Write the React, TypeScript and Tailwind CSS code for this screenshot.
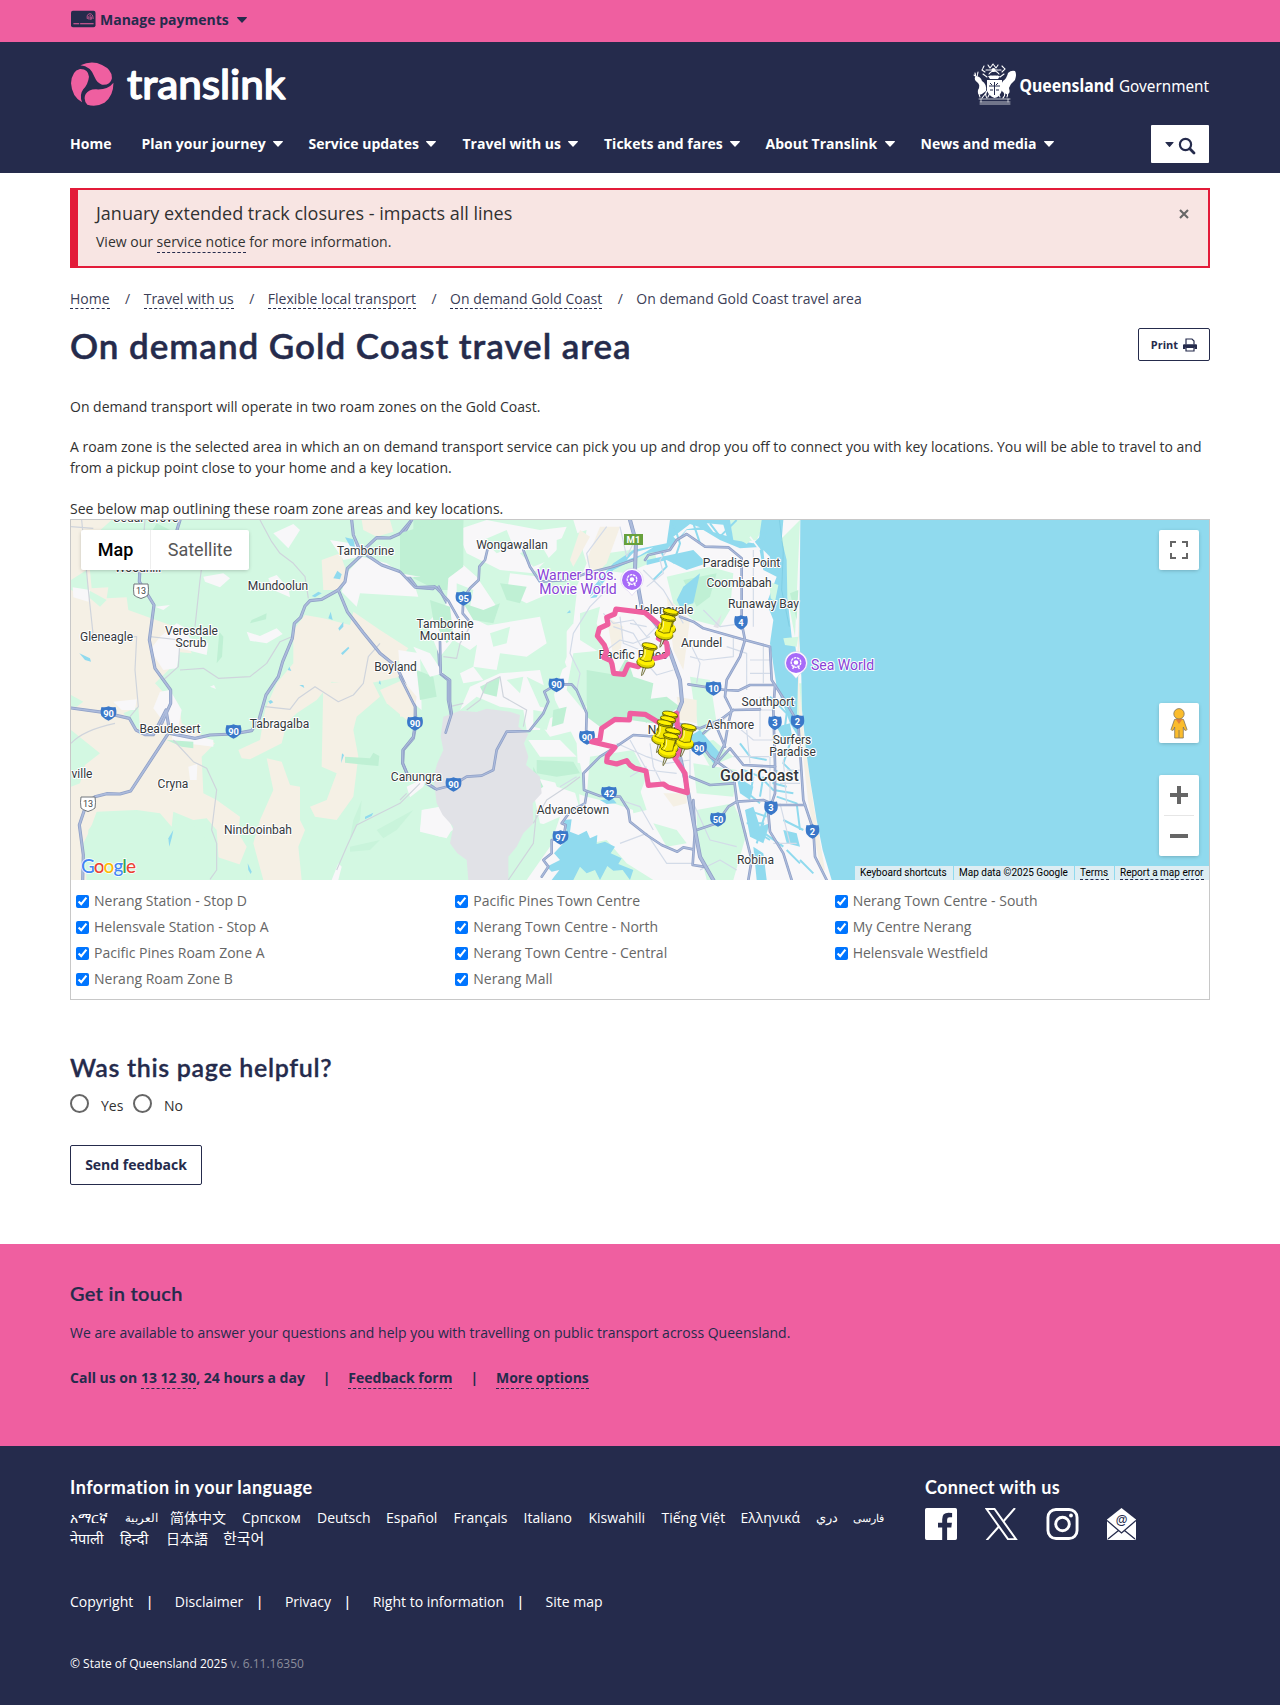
import React from "react";

/* ---------- shared bits ---------- */

const Caret = ({ className = "h-[6px] w-[10px]" }: { className?: string }) => (
  <svg viewBox="0 0 10 6" className={"shrink-0 fill-current " + className}>
    <path d="M0.4 0h9.2q.6.4.1.9L5.5 5.6q-.5.5-1 0L.3.9Q-.2.4.4 0Z" />
  </svg>
);

const Dashed = ({ children }: { children: React.ReactNode }) => (
  <a href="#" className="border-b border-dashed border-[#252b4c] pb-px leading-[17px]">
    {children}
  </a>
);

/* ---------- header ---------- */

const TranslinkLogo = () => (
  <svg viewBox="0 0 220 46" className="h-[46px] w-[220px]">
    <g transform="translate(-70,-61) scale(0.40816,0.33333)" fill="#ef5fa0">
      <path d="M197 196Q225 180 250 195Q276 210 274 236Q270 256 250 254Q238 250 232 232Q222 198 197 196Z" />
      <path d="M201 307Q176 290 174 250Q176 212 196 207Q216 206 218 230Q216 252 204 268Q194 284 201 307Z" />
      <path d="M278 248Q278 288 256 308Q236 322 214 314Q203 298 210 282Q218 267 236 268Q264 270 278 248Z" />
    </g>
    <text
      x="57"
      y="38"
      textLength="158.5"
      lengthAdjust="spacingAndGlyphs"
      fontSize="39.5"
      className="fill-white stroke-white font-medium [font-family:Lato,sans-serif]"
      strokeWidth="1.3"
      strokeLinejoin="round"
    >
      translink
    </text>
  </svg>
);

const QldLogo = () => (
  <svg viewBox="0 0 238 44" className="h-[44px] w-[238px] overflow-visible">
    <g fill="none" stroke="#fff" strokeWidth="1.1" strokeLinecap="round" strokeLinejoin="round">
      <path d="M16 3l2 3 3-4 3 4 2-3M12 4l-2 4 3 2M30 4l3 3-3 3M14 8h15M17 12q5-6 10 0M18 14h8M11 12l4 3M32 12l-4 3M2 13l4 3M3 11l1 4M6 10l-1 5" strokeDasharray="2.500 0.800" />
      <path d="M7 37h31M8 40h30M8 42h30M9 37v3M36 37v3" strokeWidth="0.700" />
      <path d="M8 35q-3-6 3-9M10 36l4-5M15 36q-3-4 1-8M35 35q2-5-3-9M31 36q4-4-1-8M16 35l2-4M28 35l-2-4" />
    </g>
    <g fill="#fff">
      <path d="M3 15q5-2 7 4q5 3 4 10l-4 3q-5 2-4-4q3-5-1-8q-3-2-2-5Z" />
      <path d="M43 9q-4-1-7 2q-1 5-5 8q-3 4-1 10l4 3q5 1 3-6q2-5 6-8q2-6 0-9Z" />
      <path d="M15 18h15v10q-2 7-7.500 8q-6-2-7.500-8Z" />
      <circle cx="21.500" cy="8" r="2" />
      <path d="M16 14h12l-2 3h-8Z" />
    </g>
    <path d="M22.500 20v13M17 24h11M18 21l2 2M26 21l-2 2M18 28h3M24 28h3" stroke="#252b4c" strokeWidth="1" fill="none" />
    <text x="47.5" y="29.8" fontSize="17.5" textLength="94.500" lengthAdjust="spacingAndGlyphs" className="fill-white font-bold [font-family:'Noto_Sans',sans-serif]">
      Queensland
    </text>
    <text x="147" y="29.8" fontSize="17" textLength="90" lengthAdjust="spacingAndGlyphs" className="fill-white font-normal [font-family:'Noto_Sans',sans-serif]">
      Government
    </text>
  </svg>
);

const navItems: [string, string][] = [
  ["Home", "w-[71.500px]"],
  ["Plan your journey", "w-[167px]"],
  ["Service updates", "w-[154px]"],
  ["Travel with us", "w-[141.500px]"],
  ["Tickets and fares", "w-[161.500px]"],
  ["About Translink", "w-[155px]"],
  ["News and media", "w-[150px]"],
];

const Header = () => (
  <header>
    <div className="h-[42px] bg-[#ef5fa0] text-[#252b4c]">
      <div className="mx-auto flex h-[39px] w-[1140px] items-center text-[14px] font-bold">
        <svg viewBox="0 0 26 18" className="mt-[-2px] mr-[4px] ml-[1px] h-[18px] w-[25px]">
          <rect x="0" y="0.500" width="25.500" height="17" rx="2" fill="#252b4c" />
          <path d="M2.500 14h6M9.500 14h14" stroke="#ef5fa0" strokeWidth="1.100" />
          <path d="M17 9q-1-5 2.500-5.500Q23 3.500 23 9M18.500 9.500q-.5-4 1.200-4.200Q21.500 5.500 21.300 9.500M20 7v3" stroke="#ef5fa0" strokeWidth="0.800" fill="none" />
        </svg>
        Manage payments
        <span className="ml-[8px]">
          <Caret />
        </span>
      </div>
    </div>
    <div className="h-[131px] bg-[#252b4c] text-white">
      <div className="mx-auto flex h-[83px] w-[1140px] items-start justify-between pt-[19px]">
        <TranslinkLogo />
        <div className="mt-[1px]">
          <QldLogo />
        </div>
      </div>
      <div className="mx-auto flex h-[38px] w-[1140px] items-center justify-between pr-px">
        <nav className="mt-[-2px] flex text-[14px] font-bold">
          {navItems.map(([label, width], i) => (
            <a key={label} href="#" className={"flex shrink-0 items-center whitespace-nowrap " + width}>
              {label}
              {i > 0 && (
                <span className="mt-[2px] ml-[7.500px]">
                  <Caret />
                </span>
              )}
            </a>
          ))}
        </nav>
        <button className="flex h-[38px] w-[58px] shrink-0 items-center justify-center rounded-[1px] bg-white text-[#252b4c]">
          <Caret className="h-[5px] w-[9px]" />
          <svg viewBox="0 0 18 18" className="mt-[3px] ml-[4px] h-[18px] w-[18px]" fill="none" stroke="#252b4c">
            <circle cx="7.500" cy="7.500" r="5.600" strokeWidth="2.200" />
            <path d="M11.800 11.800l4.200 4.200" strokeWidth="2.800" strokeLinecap="round" />
          </svg>
        </button>
      </div>
    </div>
  </header>
);

/* ---------- map ---------- */

// Western tiles use (u/3 - 11, v/3 - 10); eastern tiles use (u/3 + 329, v/3 - 10).
const WEST = "translate(-11,-10) scale(0.333333)";
const EAST = "translate(329,-10) scale(0.333333)";

const C = {
  green: "#d3f8e2",
  dark: "#bff0d4",
  beige: "#f5f0e5",
  white: "#f8f7f9",
  grey: "#e1e2e7",
  water: "#90daee",
};

const Fill = ({ c, d }: { c: string; d: string[] }) => (
  <g fill={c}>
    {d.map((p) => (
      <path key={p} d={p} />
    ))}
  </g>
);

const Road = ({ d, w = 8 }: { d: string[]; w?: number }) => (
  <g fill="none" strokeLinejoin="round" strokeLinecap="round">
    {d.map((p) => (
      <path key={p} d={p} stroke="#8fa0c6" strokeWidth={w} />
    ))}
    {d.map((p) => (
      <path key={p} d={p} stroke="#acbbdc" strokeWidth={w - 4.5} />
    ))}
  </g>
);

const Lane = ({ d, c = "#cfd4dc", w = 3.5 }: { d: string[]; c?: string; w?: number }) => (
  <g fill="none" stroke={c} strokeWidth={w} strokeLinejoin="round">
    {d.map((p) => (
      <path key={p} d={p} />
    ))}
  </g>
);

const Shield = ({ x, y, n }: { x: number; y: number; n: string }) => {
  const narrow = n.length === 1;
  return (
    <g transform={`translate(${x},${y})`}>
      <path
        d={
          narrow
            ? "M-6-6.500Q-3-5.500 0-7.300Q3-5.500 6-6.500Q7.500-1 6 2.500Q4 5.500 0 7.200Q-4 5.500-6 2.500Q-7.500-1-6-6.500Z"
            : "M-7-6.500Q-3-5.500 0-7.300Q3-5.500 7-6.500Q8.800-1 7 2.500Q4 5.500 0 7.200Q-4 5.500-7 2.500Q-8.800-1-7-6.500Z"
        }
        fill="#3a78c9"
      />
      <text textAnchor="middle" y="3.300" fontSize="9.300" className="fill-white font-bold [font-family:Roboto,sans-serif]">
        {n}
      </text>
    </g>
  );
};

const StateShield = ({ x, y }: { x: number; y: number }) => (
  <g transform={`translate(${x},${y})`}>
    <path d="M-7-7H7Q8-2 7 4Q5 6 0 7.500Q-5 6-7 4Q-8-2-7-7Z" fill="#fff" stroke="#70767c" strokeWidth="1" />
    <text textAnchor="middle" y="3.300" fontSize="9" className="fill-[#444] [font-family:Roboto,sans-serif]">
      13
    </text>
  </g>
);

const labels: [string, number, number][] = [
  ["Cedar Grove", 74.5, 2.5],
  ["Woodhill", 67, 53],
  ["Tamborine", 294.5, 35.5],
  ["Mundoolun", 207, 70.5],
  ["Gleneagle", 35.5, 121.5],
  ["Veresdale", 120.5, 115.5],
  ["Scrub", 120, 127.5],
  ["Boyland", 324.5, 151.5],
  ["Tabragalba", 208.5, 208.5],
  ["Beaudesert", 99, 213.5],
  ["ville", 11, 258.5],
  ["Cryna", 102, 268.5],
  ["Nindooinbah", 187, 314.5],
  ["Canungra", 345.5, 261.5],
  ["Wongawallan", 441, 29.5],
  ["Tamborine", 374, 108.5],
  ["Mountain", 374, 120.5],
  ["Paradise Point", 670.5, 47.5],
  ["Coombabah", 668, 67.5],
  ["Runaway Bay", 692.5, 88.5],
  ["Helensvale", 593, 94.5],
  ["Arundel", 630.5, 127.5],
  ["Pacific Pines", 562, 139.5],
  ["Southport", 697, 186.5],
  ["Ashmore", 659, 209.5],
  ["Nerang", 596, 215],
  ["Surfers", 721, 224.5],
  ["Paradise", 721.5, 236.5],
  ["Advancetown", 502, 294.5],
  ["Robina", 684.5, 344.5],
];

const shields: [string, number, number][] = [
  ["90", 37.5, 193.5],
  ["90", 162.5, 211.5],
  ["90", 344, 203.5],
  ["90", 382.5, 264.5],
  ["95", 392.5, 78.5],
  ["90", 485.5, 165],
  ["90", 516, 217.5],
  ["42", 538, 273.5],
  ["97", 489.5, 317.5],
  ["4", 670, 102.5],
  ["10", 642.5, 168.5],
  ["3", 704, 203],
  ["2", 726.5, 202],
  ["90", 628, 228.5],
  ["50", 647, 299.5],
  ["3", 700, 288],
  ["2", 741.5, 311.5],
];

const Place = ({ x, y }: { x: number; y: number }) => (
  <g transform={`translate(${x},${y})`}>
    <path d="M0 15.500Q-3 11-7.500 8.200A11.300 11.300 0 1 1 7.500 8.200Q3 11 0 15.500Z" fill="#fff" stroke="#c9b8e8" strokeWidth="0.400" />
    <circle r="10" fill="#a76bf8" />
    <g fill="none" stroke="#fff" strokeWidth="1.300">
      <circle r="4.800" cy="-0.500" strokeDasharray="2.600 0.700" />
      <path d="M-3.300 6l1.500-3.500M3.300 6L1.800 2.500" />
    </g>
    <circle r="2.300" cy="-0.500" fill="#fff" />
  </g>
);

const Pin = ({ x, y }: { x: number; y: number }) => (
  <g transform={`translate(${x},${y})`} stroke="#4b4a00" strokeWidth="2.200" strokeLinejoin="round">
    <path d="M6-30L0-6V0L4-4L15-28Z" fill="#e8e8e8" />
    <ellipse cx="12" cy="-38" rx="27" ry="15" transform="rotate(10 12 -38)" fill="#d8cf00" />
    <ellipse cx="13" cy="-44" rx="26" ry="13" transform="rotate(10 13 -44)" fill="#fff100" stroke="none" />
    <path d="M6-86L5-66Q4-56-6-50Q10-38 29-44Q31-58 38-78Z" fill="#f4e600" />
    <path d="M11-78L10-62Q8-54 2-49" fill="none" stroke="#fffa9a" strokeWidth="3" />
    <ellipse cx="24" cy="-86" rx="23" ry="8" transform="rotate(12 24 -86)" fill="#d8cf00" />
    <ellipse cx="24" cy="-90" rx="23" ry="7.500" transform="rotate(12 24 -90)" fill="#fff100" />
  </g>
);

const MapDrawing = () => (
  <svg viewBox="0 0 1138 360" className="block h-[360px] w-[1138px]">
    <rect width="1138" height="360" fill={C.green} />
    <g transform={WEST}>
      <Fill
        c={C.beige}
        d={[
          "M33 30H155L110 70L85 130L95 235L145 232L140 265L200 262L205 300L330 345L385 400L395 430L345 425L335 470L285 520L360 600L365 640L465 700L425 740L430 850L470 870L540 920L535 970L560 1010L520 1110H480L470 960L440 925L400 930L340 905L335 950L300 910L230 900L110 905L90 960L70 1000L80 1110H33Z",
          "M535 720L600 690L615 600L650 520L700 460L700 360L735 315L790 325L870 345L880 305L960 360L1045 415L1010 460L1020 500L930 520L860 520L815 515L770 570L710 610L680 640L665 700L570 748L545 745Z",
          "M790 520L935 510L960 560L890 620L880 660L895 740L880 860L830 930L765 920L750 890L800 870L830 790L785 770Z",
          "M620 745L665 755L690 825L720 830L720 930L735 960L715 1010L725 1110H610L580 1000L600 930L640 840Z",
          "M785 150L840 130L865 200L830 240L790 240Z",
          "M905 30H990L1000 65L950 80L910 60Z",
          "M960 540L1050 500L1060 620L1040 630L980 580Z",
        ]}
      />
      <Fill
        c={C.green}
        d={["M33 660L120 730L75 765L60 820L33 830Z", "M33 555L70 575L50 590L33 590Z", "M190 610L235 590L240 660L215 640Z", "M85 960L120 915L220 905L290 960L335 1000L350 920L420 960L470 1040L560 1070V1110H80Z", "M33 210L80 180L85 240L140 270L120 290L85 260L33 240Z"]}
      />
      <Fill
        c={C.white}
        d={[
          "M640 70L700 42L720 60L685 115Z", "M430 200L490 190L510 205L480 232L435 215Z", "M38 232L90 240L85 275L40 262Z",
          "M300 380L350 340L370 350L390 385L445 400L440 435L360 415L350 475L310 480L270 420Z", "M560 365L600 378L650 355L668 372L620 400L570 392Z",
          "M860 190L905 140L980 160L1060 215L1075 260L900 250L890 290L845 245Z", "M810 90L905 105L900 140L850 150Z",
          "M160 575L230 568L225 600L185 600Z", "M300 545L330 540L365 600L355 650L310 635L280 595Z", "M330 660L460 690L460 710L340 695Z",
          "M385 770L412 762L410 810L390 810Z", "M1015 420L1080 430L1085 600L1060 580L1020 490Z", "M1040 830L1100 800L1090 830L1050 862Z",
          "M1085 900L1140 890L1150 945L1175 960L1160 985L1080 965Z", "M815 1110L835 1060L845 1070L835 1110Z", "M625 205L650 195L685 235L690 262L640 240Z", "M285 290L330 285L310 300Z", "M450 530L462 525L468 537Z",
        ]}
      />
      <Fill
        c={C.dark}
        d={[
          "M1060 30H1210L1200 180L1210 240L1130 240L1060 205L1080 130L1120 110L1060 80Z", "M1030 105L1100 110L1080 160L1050 135Z", "M575 330L620 310L618 328L570 340Z",
          "M855 740L930 745L940 728L958 738L955 768L920 765L855 758Z", "M478 365L490 380L486 440L470 460Z", "M320 690L400 695L400 715L365 710Z", "M1070 480L1120 500L1130 560L1080 570Z",
          "M270 75L290 40L330 60L290 85Z",
        ]}
      />
      <Fill c="#c9f4db" d={["M880 930L905 870L900 930L870 985Z", "M950 960L1060 900L1010 960L970 985Z", "M870 1010L960 990L930 1020L870 1025Z"]} />
      <Fill
        c={C.water}
        d={[
          "M820 205L832 182L845 193L840 208Z", "M755 258L775 245L785 250L765 262Z", "M805 325L812 305L818 330Z", "M835 355L850 335L850 350L838 362Z", "M843 430L865 410L868 415L848 435Z",
          "M683 480L688 470L694 483Z", "M718 525L730 525L733 534Z", "M956 520L960 510L963 524Z", "M625 574L633 570L640 577L630 582Z", "M58 430L90 445L93 455L75 450Z", "M843 760L846 730L852 735Z",
          "M325 985L340 960L336 980L328 1010Z", "M563 1060L575 1085L572 1092L565 1080Z", "M855 82L880 88L885 110L870 108Z", "M915 920L940 908L935 918L915 928Z",
        ]}
      />
      <Lane
        d={[
          "M33 50L100 55M65 30L85 240L100 380H230L225 480L235 590L210 620M600 30L635 95L660 130L700 160L735 200L745 265M440 60L420 210L405 350M360 480L430 475L475 505L570 500L620 460L660 395L695 380M615 590L690 598L715 565L765 530L835 575L880 555L910 520L925 440L960 400M340 690L400 755L440 775L470 840L455 960L470 1000V1080L450 1108M270 380L360 390L355 470L310 510M33 700Q70 660 165 640M1080 820L1020 880L960 910L890 945L860 1010L830 1080M255 30L240 200",
        ]}
      />
      <Road
        w={9.5}
        d={[
          "M360 30L345 80L240 170L238 215L268 262L282 285L268 390L285 475L332 540V580L305 640", "M325 670L212 843L180 852L140 851L105 860L80 880L58 945L70 1035L68 1110",
          "M33 594L130 607L208 625L228 660L255 674H280L318 600L330 670L405 685L450 675L520 672L575 662L598 625L618 555L655 500L668 455L697 385L703 340L722 322L735 288L750 272L785 268L835 240L855 215L862 175L905 135L895 110L880 75L875 30",
          "M905 125L950 83L990 84L1035 64L1055 30", "M905 125L965 165L1040 192L1070 232L1118 236L1132 225L1155 268L1190 325", "M835 240L862 305L910 368L960 430L1010 470L1065 590L1068 640L1060 685L1030 720L1028 760L1045 800",
          "M1100 820L1130 838L1175 820", "M1135 395L1140 490L1165 510V570L1173 610L1157 668",
        ]}
      />
    </g>

    <g transform={EAST}>
      <Fill
        c={C.white}
        d={[
          "M520 30H1220L1230 640L1300 1110H360L400 1000L540 900L530 700L460 560L500 440L500 300L560 160Z",
          "M260 30L420 60L500 50L470 120L400 190L300 180L200 130L170 60Z", "M150 130L230 200L290 290L230 330L290 360L210 420L160 390L120 440L80 340L140 280Z",
          "M240 350L420 320L440 400L380 440L300 430L290 480L220 470Z", "M300 490L420 480L440 560L420 660L380 660L370 600L300 590L230 560L180 600L210 530Z",
          "M330 190L420 200L450 250L380 280L320 250Z", "M385 690L480 690L530 740L420 740Z", "M20 160L70 200L10 200Z", "M180 490L220 470L250 510L190 520Z", "M40 410L90 430L130 490L90 500Z",
          "M390 800L520 830L540 900L500 960L420 940Z", "M70 900L130 890L160 960L120 980L60 960Z", "M420 640L500 600L530 660L450 680Z",
        ]}
      />
      <Fill
        c={C.green}
        d={[
          "M470 90L560 60L540 160L470 180Z", "M540 310L600 290L590 340L620 440L540 390Z", "M520 430L620 420L640 480L550 600L500 540Z", "M620 130L760 110L770 150L680 190L600 180Z", "M570 740L700 720L740 800L700 900L640 880L560 860Z",
          "M800 200L930 170L1000 190L990 300L960 350L880 330L820 280Z", "M990 30L1100 30L1070 90L1000 100Z", "M1140 90L1200 30L1185 380L1160 250Z", "M870 500L930 510L950 640L900 690L880 570Z",
          "M690 840L720 840L740 900L700 910Z", "M880 760L1010 780L1000 860L890 850Z", "M890 900L1000 880L1040 970L1000 1110H920L890 980Z", "M520 1010L620 990L680 1060L760 1110H500Z", "M760 940L830 960L860 1000L800 1010Z", "M1110 60L1140 100L1120 130Z",
          "M890 700L940 690L1000 740L930 770Z", "M1190 520L1205 520L1205 660L1190 640Z",
          "M420 280L530 250L520 340L470 400L430 350Z", "M360 130L420 100L450 150L400 170Z", "M250 90L320 60L340 110L290 130Z", "M380 500L460 540L470 600L420 590Z", "M440 740L540 760L560 860L470 830Z", "M390 960L480 920L450 1010L380 1110H330Z",
          "M430 430L480 420L500 470L450 500Z", "M270 370L330 350L320 400L280 410Z", "M320 510L370 500L360 550Z", "M170 220L220 240L210 290L170 270Z", "M400 600L455 610L440 660L400 650Z",
        ]}
      />
      <Fill
        c={C.dark}
        d={[
          "M560 480L650 495L680 440L700 500L760 520L740 640L700 600L640 630L600 650L560 620Z", "M560 590L800 560L840 590L760 640L620 620Z", "M0 70L130 30H190L190 170L110 230L60 200L0 190Z", "M90 270L150 290L160 380L140 400L100 330Z",
          "M410 750L520 755L540 790L470 800L410 790Z", "M240 530L300 500L290 560L250 550Z", "M190 280L250 300L300 280L280 340L220 330Z", "M1170 250L1195 240L1190 330Z", "M850 210L950 190L930 260L890 290Z", "M300 220L380 230L360 280L320 270Z",
          "M460 600L500 590L490 640L455 650Z", "M400 770L430 830L400 850Z",
        ]}
      />
      <Fill c={C.grey} d={["M130 620L180 602L230 606L260 596L330 605L360 615L355 650L385 672L372 700L385 740L378 765L420 800L425 850L398 880L400 940L370 970L350 1010L325 1040V1110H205L200 1050L172 1030L150 1000L160 950L128 915L110 880L100 800L112 760L130 720L122 680Z", "M940 350L965 312L955 355Z"]} />
      <Fill c={C.beige} d={["M0 500L50 560L40 620L0 620Z", "M560 150L600 50L660 50L620 160L580 200Z", "M620 320L670 350L660 440L640 440Z", "M800 260L870 330L850 480L820 420Z", "M790 850L860 850V880L820 890Z", "M830 560L890 570V640L840 630Z", "M1205 60L1196 500L1210 660L1240 880L1275 1080L1262 1080L1225 880L1200 660L1190 500Z", "M540 60L570 80L520 170L510 150Z"]} />
      <Fill
        c={C.water}
        d={[
          "M1201 30L1198 380L1204 500L1206 600L1218 720L1232 820L1250 930L1268 1020L1295 1110H2744V30Z",
          "M1085 30H1150L1145 90L1160 150L1162 260L1175 380L1185 400L1195 480L1190 640L1200 690L1170 640L1130 530L1110 400L1120 330L1100 280L1130 200L1090 180L1075 100Z",
          "M810 30H990L1000 90L1060 100L1100 60L1090 110L1020 115L960 90L910 60L860 60L810 120L740 130L640 180L600 230L570 260L580 230L640 160L700 120L800 100Z",
          "M850 230L900 190L880 280L840 290L830 270Z", "M740 150L880 120L920 160L860 180L800 150L740 165Z", "M570 265L600 240L590 262Z",
          "M490 930L515 928L510 965L535 975L560 962L570 985L592 975L590 1002L615 995L645 1010L632 1030L665 1045L655 1062L700 1080L690 1110L668 1080L640 1082L622 1068L600 1110L585 1080L560 1090L540 1070L520 1110H455L478 1080L455 1085L440 1070L480 1050L462 1030L490 1000L478 975L500 960Z",
          "M850 690L900 660L960 730L940 760L900 700Z", "M1035 900L1060 890L1080 950L1110 940L1090 1000L1050 980Z", "M1010 800L1060 830L1050 870L1020 850Z", "M1060 1010L1090 1030L1100 1110H1070Z", "M1130 650L1170 640L1180 700L1150 690Z", "M1150 960L1190 970L1200 1010L1160 1000Z",
          "M500 310L510 300L512 308Z", "M600 870L640 868L650 880L620 882Z",
        ]}
      />
      <Fill c={C.white} d={["M870 42L900 52L860 58L830 90L820 80Z", "M920 40L970 44L980 78L940 66Z", "M1090 120L1110 140L1095 170Z", "M700 128L760 112L720 136L680 150Z"]} />
      <Fill c={C.green} d={["M998 30H1082L1075 70L1040 102L1005 80Z", "M1108 215L1135 225L1125 275L1112 265Z", "M1150 385L1195 380L1190 410L1155 405Z"]} />
      <Lane
        c="#90daee"
        w={6}
        d={[
          "M820 40L840 100L820 160M880 40L900 100M930 40L960 80L1010 30M780 110L800 170L760 210M1020 700L1050 740L1100 750M1030 780L1080 800L1120 840L1180 850M1020 830L1080 880M1100 900L1080 960L1150 1010M1040 940H1090L1070 1000M1130 860L1190 880L1200 960M1150 930L1210 960M1110 560L1160 610L1150 690M1170 700L1150 760L1190 800M1060 800L1050 860M1160 1020L1200 1060M1200 1050L1240 1090M1040 900L1100 920M1060 960L1110 990M1090 800L1080 860M1130 780L1120 820L1160 830",
        ]}
      />
      <Lane c="#f8f7f9" w={5} d={["M900 130L960 150L1000 140M1050 80L1080 120"]} />
      <Lane
        c="#d3dbe8"
        d={[
          "M620 50L560 130L570 180L620 240L570 290L520 370L510 430L540 490L530 540M660 50L680 140L700 100M610 310L640 340L700 330L740 380L770 350M620 420L660 390L700 400L750 380M660 320L670 400L720 420M640 350L700 370L730 420M690 340L740 350M740 460L770 495L820 480M870 440L910 450L1000 440L1000 380M870 400L900 460L890 520M740 230L790 190L780 150L810 110M730 180L790 240L850 340M650 700L740 740L800 760L870 750M690 690L740 780L830 790M750 700L760 770L790 830M870 720L870 800L910 820M690 800L740 770M660 870L720 890L760 960M480 830L530 800M880 880L930 990L1010 1010M660 1000L740 970L800 1060L880 1060M900 1080L960 1050L1010 1080M1000 640L1060 690H1180M960 640L1000 600H1120M1040 660L1050 760M1080 560V680M1110 740V880M1150 750L1160 880M1140 880L1170 1000M1000 740H1120M1040 540V430L980 410M910 300L960 350L1030 340M1050 450H1110M1050 490H1110M1060 120V350M1090 400V520M1160 780H1200M1140 820H1200M1120 1000H1190",
        ]}
      />
      <Lane d={["M200 600L240 570L260 520L300 500L310 560L380 600L370 650M130 440L170 445L180 400L210 350M400 940L440 870L500 830L540 800M150 590L190 580M0 870L20 850M325 1110L400 1000L410 900"]} />
      <Road
        d={[
          "M262 120L255 150L238 170L236 210L210 235L190 265L188 310L205 330", "M370 120L390 170L420 215L500 210L560 190L640 170L700 150", "M0 185L45 232L105 230L145 272L175 325", "M120 395L122 490L150 510V575L155 610L137 668", "M0 500L45 590V640L40 680L8 720V760L25 800",
          "M80 820L110 838L160 825L200 800L245 797L280 780L290 720L320 665L388 663L430 610L445 575L433 545L470 523H515L530 540L560 610L558 680",
          "M645 712L600 740L550 790L552 840L600 858L660 860L685 900L690 935L740 975L785 1005L832 1025L850 1012L880 1018", "M645 712L700 675L770 680", "M560 850L555 880L510 905L485 940L497 945L490 985L455 990V1030L430 1050L445 1070L425 1100",
          "M735 150L745 135L810 120L830 90L860 72L915 110L985 112L1025 145V340L1035 390L1020 440L980 510L975 560L995 600L985 640L975 700L940 770", "M840 320L880 335L910 355L1035 390L1110 410L1115 510L1160 580L1195 640L1200 720L1210 870L1240 960L1245 1040L1280 1110",
          "M865 523L975 540L1015 542L1050 525L1125 525", "M1125 525L1120 600L1125 760L1125 850L1105 910L1110 965L1150 1030L1175 1110", "M830 640L900 655L960 630L1000 600", "M1000 600L1080 598", "M900 700L930 740L1000 790L1010 870L1030 950L1055 1050L1045 1110",
          "M890 960L950 940L985 890L1010 875L1090 870L1125 885L1215 885", "M870 800L930 825L1000 820", "M940 770L990 715L1030 765L1125 770", "M910 670L945 640L975 710", "M880 870L885 960L878 1065L910 1070", "M0 70L30 35",
        ]}
      />
      <Road w={12} d={["M690 30L708 95L705 180L725 290L790 370L840 510L846 575L820 640L840 740L865 850L885 960L900 1040L940 1110"]} />
      <Lane c="#78c8df" w={2} d={["M1138 30L1150 120L1145 240L1168 350"]} />
    </g>

    <g>
      {shields.map(([n, x, y]) => (
        <Shield key={`${n}-${x}`} n={n} x={x} y={y} />
      ))}
      <StateShield x={70} y={71} />
      <StateShield x={17} y={284} />
      <rect x="553" y="14" width="19" height="11" fill="#67a03c" />
      <text x="562.5" y="23" fontSize="9.500" textAnchor="middle" className="fill-white font-bold [font-family:Roboto,sans-serif]">
        M1
      </text>
    </g>

    <g
      transform="translate(0,-1)"
      className="[font-family:Roboto,sans-serif] [paint-order:stroke]"
      textAnchor="middle"
      stroke="#fff"
      strokeWidth="2"
      strokeLinejoin="round"
      fill="#33373b"
    >
      {labels.map(([t, x, y]) => (
        <text key={`${t}-${y}`} x={x} y={y} fontSize="12">
          {t}
        </text>
      ))}
      <text x="688.5" y="262" fontSize="16" fontWeight="500">
        Gold Coast
      </text>
      <g fill="#8743d6" fontSize="14">
        <text x="506" y="61">Warner Bros.</text>
        <text x="507" y="75">Movie World</text>
        <text x="771.500" y="151">Sea World</text>
      </g>
    </g>
    <Place x={561} y={60} />
    <Place x={725} y={143} />

    <g transform={EAST}>
      <g fill="none" stroke="#ef5fa0" strokeWidth="15.500" strokeLinejoin="round">
        <path d="M648 297L735 308L790 355L775 385L800 400L803 430L795 438L735 452L715 470L685 463L672 493L641 490L636 462L632 452L611 442L620 425L613 405L592 378L598 355L624 343L620 322L644 312Z" />
        <path d="M690 610L735 613L780 640L830 610L832 650L850 665L838 690L850 710L825 745L855 790L862 848L805 832L790 822L745 826L738 783L705 775L690 765L680 752L650 762L620 755L622 738L645 712L575 695L600 688L605 655L645 628L688 630Z" />
      </g>
      <Pin x={788} y={394} />
      <Pin x={780} y={412} />
      <Pin x={725} y={497} />
      <Pin x={786} y={702} />
      <Pin x={780} y={716} />
      <Pin x={770} y={728} />
      <Pin x={842} y={740} />
      <Pin x={795} y={752} />
      <Pin x={789} y={767} />
    </g>

    <text x="10" y="352.5" fontSize="19" textLength="55" className="[font-family:Lato,sans-serif] [paint-order:stroke]" stroke="#fff" strokeWidth="1.500" fontWeight="500">
      <tspan fill="#4285f4">G</tspan>
      <tspan fill="#ea4335">o</tspan>
      <tspan fill="#fbbc05">o</tspan>
      <tspan fill="#4285f4">g</tspan>
      <tspan fill="#34a853">l</tspan>
      <tspan fill="#ea4335">e</tspan>
    </text>
  </svg>
);

const mapButton = "absolute right-[10px] flex w-[40px] items-center justify-center rounded-[2px] bg-white shadow-[0_1px_4px_-1px_rgba(0,0,0,0.3)]";

const MapPanel = () => (
  <div className="relative h-[360px] overflow-hidden [font-family:Roboto,sans-serif]">
    <MapDrawing />
    <div className="absolute top-[10px] left-[10px] flex h-[40px] rounded-[2px] bg-white pb-px text-[18px] shadow-[0_1px_4px_-1px_rgba(0,0,0,0.3)]">
      <div className="flex w-[70px] items-center justify-center border-r border-[#eee] font-medium text-black">Map</div>
      <div className="flex w-[98px] items-center justify-center text-[#565656]">Satellite</div>
    </div>
    <div className={mapButton + " top-[10px] h-[40px]"}>
      <svg viewBox="0 0 18 18" className="h-[18px] w-[18px]" fill="#666">
        <path d="M0 0v6h2V2h4V0H0zm16 0h-4v2h4v4h2V0h-2zm0 16h-4v2h6v-6h-2v4zM2 12H0v6h6v-2H2v-4z" />
      </svg>
    </div>
    <div className={mapButton + " top-[183px] h-[40px]"}>
      <svg viewBox="0 0 18 31" className="h-[31px] w-[18px]" stroke="#7d7361" strokeWidth="0.800" strokeLinejoin="round">
        <path d="M4.500 11.500Q9 9.500 13.500 11.500L17 21.500Q16.500 23 14.500 22L13.300 19V30H4.700V19L3.500 22Q1.500 23 1 21.500Z" fill="#fbbc2c" />
        <path d="M9 22V30" />
        <path d="M5.500 11h7L9 16Z" fill="#e2813a" stroke="none" />
        <circle cx="9" cy="5.800" r="5.200" fill="#fbbc2c" />
      </svg>
    </div>
    <div className={mapButton + " top-[255px] h-[81px] flex-col"}>
      <svg viewBox="0 0 30 61" className="h-[61px] w-[30px]">
        <path d="M13 1h4v7h7v4h-7v7h-4v-7H6V8h7zM6 49h18v4H6z" fill="#666" />
        <path d="M0 30h30v1H0z" fill="#e6e6e6" />
      </svg>
    </div>
    <div className="absolute right-0 bottom-0 flex h-[14px] gap-px text-[10px] leading-[14px] whitespace-nowrap text-black">
      <span className="w-[98px] bg-[#dcedf3] pl-[5px]">Keyboard shortcuts</span>
      <span className="w-[120px] bg-[#dcedf3] pl-[5px]">Map data ©2025 Google</span>
      <span className="w-[39px] bg-[#dcedf3] px-[5px]">
        <span className="block h-[14px] border-b border-dashed border-[#252b4c]">Terms</span>
      </span>
      <span className="w-[94px] bg-[#dcedf3] px-[5px]">
        <span className="block h-[14px] border-b border-dashed border-[#252b4c]">Report a map error</span>
      </span>
    </div>
  </div>
);

const columns = [
  ["Nerang Station - Stop D", "Helensvale Station - Stop A", "Pacific Pines Roam Zone A", "Nerang Roam Zone B"],
  ["Pacific Pines Town Centre", "Nerang Town Centre - North", "Nerang Town Centre - Central", "Nerang Mall"],
  ["Nerang Town Centre - South", "My Centre Nerang", "Helensvale Westfield"],
];

/* ---------- main ---------- */

const crumbs = ["Home", "Travel with us", "Flexible local transport", "On demand Gold Coast"];

const heading = "font-semibold text-[#252b4c] [font-family:Lato,sans-serif]";

const Main = () => (
  <main className="mx-auto h-[1071px] w-[1140px] pt-[15px] text-[14px] leading-[21px] text-[#313131]">
    <section className="flex h-[80px] justify-between border-2 border-l-8 border-[#e31b39] bg-[#f8e5e3] pr-[19px] pl-[18px]">
      <div>
        <h2 className="mt-[10px] text-[18px] leading-[26px]">January extended track closures - impacts all lines</h2>
        <p className="mt-[5px]">
          View our <Dashed>service notice</Dashed> for more information.
        </p>
      </div>
      <svg viewBox="0 0 10 10" className="mt-[19px] h-[10px] w-[10px]" stroke="#666" strokeWidth="2.100">
        <path d="M1 1l8 8M9 1l-8 8" />
      </svg>
    </section>

    <ol className="mt-[20px] flex h-[21px] whitespace-nowrap text-[#3c4057]">
      {crumbs.map((c) => (
        <li key={c} className="flex">
          <span className="h-[21px] border-b border-dashed border-[#252b4c]">{c}</span>
          <span className="w-[34.100px] pl-[2px] text-center">/</span>
        </li>
      ))}
      <li>On demand Gold Coast travel area</li>
    </ol>

    <div className="mt-[19px] flex h-[38px] justify-between">
      <h1 className={heading + " mt-[-2px] text-[35px] leading-[38px] tracking-[0.960px] [-webkit-text-stroke:0.500px_#252b4c]"}>On demand Gold Coast travel area</h1>
      <button className="flex h-[33px] w-[72px] items-center justify-center rounded-[2px] border border-[#252b4c] text-[11px] font-bold text-[#252b4c]">
        Print
        <svg viewBox="0 0 14 14" className="ml-[5px] h-[14px] w-[14px]" fill="none" stroke="#252b4c">
          <path d="M3 6.500V1h6l2 2v3.500" strokeWidth="1.200" />
          <path d="M1 6.200h12q1 0 1 1V11h-2.500V9.200h-9V11H0V7.200q0-1 1-1Z" fill="#252b4c" stroke="none" />
          <path d="M3 9.500h8V13H3z" strokeWidth="1.200" />
        </svg>
      </button>
    </div>

    <p className="mt-[30px]">On demand transport will operate in two roam zones on the Gold Coast.</p>
    <p className="mt-[19px]">
      A roam zone is the selected area in which an on demand transport service can pick you up and drop you off to connect you with key locations. You will be able to travel to and from a pickup point close to your home and a key
      location.
    </p>
    <p className="mt-[20px]">See below map outlining these roam zone areas and key locations.</p>

    <section className="h-[481px] border border-[#c8c8c8]">
      <MapPanel />
      <div className="flex pt-[7px] text-[#666]">
        {columns.map((items) => (
          <ul key={items[0]} className="w-[379.5px] pl-[5px]">
            {items.map((t) => (
              <li key={t} className="flex h-[26px] items-center">
                <input type="checkbox" defaultChecked className="mt-[2px] mr-[5px] h-[13px] w-[13px]" />
                {t}
              </li>
            ))}
          </ul>
        ))}
      </div>
    </section>

    <h2 className={heading + " mt-[51px] text-[25px] leading-[32px] tracking-[0.670px] [-webkit-text-stroke:0.300px_#252b4c]"}>Was this page helpful?</h2>
    <div className="mt-[11px] flex h-[24px]">
      {["Yes", "No"].map((t) => (
        <label key={t} className="flex w-[63px]">
          <span className="mr-[12px] h-[19px] w-[19px] rounded-full border-2 border-[#666]" />
          <span className="mt-[1px]">{t}</span>
        </label>
      ))}
    </div>
    <button className="mt-[27px] h-[40px] w-[132px] rounded-[2px] border border-[#252b4c] pb-px font-bold text-[#252b4c]">Send feedback</button>
  </main>
);

/* ---------- footer ---------- */

const languages: [string, string][] = [
  ["አማርኛ", "w-[54px]"],
  ["العربية", "w-[46px] pl-px text-[12px]"],
  ["简体中文", "w-[72px]"],
  ["Српском", "w-[75px]"],
  ["Deutsch", "w-[69px]"],
  ["Español", "w-[67.500px]"],
  ["Français", "w-[70px]"],
  ["Italiano", "w-[65px]"],
  ["Kiswahili", "w-[73px]"],
  ["Tiếng Việt", "w-[79px]"],
  ["Ελληνικά", "w-[75px]"],
  ["دري", "w-[37px] text-[12.500px]"],
  ["فارسی", "w-[34px] text-[11px]"],
  ["नेपाली", "w-[50px] text-[14.500px]"],
  ["हिन्दी", "w-[46px] text-[15px]"],
  ["日本語", "w-[57px]"],
  ["한국어", "w-[60px] text-[15px]"],
];

const footerHeading = "text-[18px] leading-[26px] font-bold [font-family:Lato,sans-serif]";

const Footer = () => (
  <footer>
    <section className="h-[202px] bg-[#ef5fa0] pt-[36px] text-[#252b4c]">
      <div className="mx-auto w-[1140px] text-[14px] leading-[21px]">
        <h2 className={heading + " text-[20px] leading-[26px] tracking-[0.300px] [-webkit-text-stroke:0.200px_#252b4c]"}>Get in touch</h2>
        <p className="mt-[16px]">We are available to answer your questions and help you with travelling on public transport across Queensland.</p>
        <p className="mt-[24px] font-bold">
          Call us on <Dashed>13 12 30</Dashed>, 24 hours a day
          <span className="inline-block w-[43.500px] text-center">|</span>
          <Dashed>Feedback form</Dashed>
          <span className="inline-block w-[43.500px] text-center">|</span>
          <Dashed>More options</Dashed>
        </p>
      </div>
    </section>
    <section className="h-[259px] bg-[#252b4c] pt-[28px] text-white">
      <div className="mx-auto w-[1140px]">
        <div className="flex h-[115px]">
          <div className="w-[855px]">
            <h3 className={footerHeading + " tracking-[0.480px]"}>Information in your language</h3>
            <div className="mt-[7px] flex w-[830px] flex-wrap text-[14px] leading-[21px] [font-family:'Open_Sans','Noto_Sans','Noto_Sans_CJK_SC',sans-serif]">
              {languages.map(([t, w]) => (
                <a key={t} href="#" className={"h-[21px] whitespace-nowrap " + w}>
                  {t}
                </a>
              ))}
            </div>
          </div>
          <div>
            <h3 className={footerHeading + " tracking-[0.360px]"}>Connect with us</h3>
            <div className="mt-[8px] flex gap-[28px]">
              <svg viewBox="0 0 32 32" className="h-[32px] w-[32px]" fill="#fff">
                <path d="M1.700 0H30.300Q32 0 32 1.700V30.300Q32 32 30.300 32H22.100V19.600H26.300L26.900 14.800H22.100V11.700Q22.100 9.300 24.500 9.300H27.100V5Q25.500 4.800 23.400 4.800Q17.200 4.800 17.200 11.200V14.800H13V19.600H17.200V32H1.700Q0 32 0 30.300V1.700Q0 0 1.700 0Z" />
              </svg>
              <svg viewBox="0 0 33 32" className="h-[32px] w-[33px]" fill="none" stroke="#fff" strokeWidth="2">
                <path d="M1.500 1H9.500L31 31.200H23Z" />
                <path d="M30 0L18.300 13.500M14.300 18L1.500 32.500" />
              </svg>
              <svg viewBox="0 0 32 32" className="h-[32px] w-[33px]" fill="none" stroke="#fff" strokeWidth="2.900">
                <rect x="1.450" y="1.450" width="29.100" height="29.100" rx="8" />
                <circle cx="16" cy="16" r="6.800" />
                <circle cx="24.500" cy="7.500" r="1.900" fill="#fff" stroke="none" />
              </svg>
              <svg viewBox="0 0 29 32" className="h-[32px] w-[29px]">
                <path d="M0 11.500L14.500 0L29 11.500V30.500Q29 32 27.500 32H1.500Q0 32 0 30.500Z" fill="#fff" />
                <path d="M0 12.500L14.500 25L29 12.500M1 31L11.500 22.500M28 31L17.500 22.500" stroke="#252b4c" strokeWidth="1.300" fill="none" />
                <text x="14.500" y="16" fontSize="12" textAnchor="middle" className="fill-[#252b4c] font-bold [font-family:'Liberation_Sans',sans-serif]">
                  @
                </text>
              </svg>
            </div>
          </div>
        </div>
        <nav className="mt-[2px] flex text-[14px] leading-[21px]">
          {["Copyright", "Disclaimer", "Privacy", "Right to information", "Site map"].map((t, i) => (
            <React.Fragment key={t}>
              {i > 0 && <span className="w-[41.600px] pr-[9px] text-center font-semibold">|</span>}
              <a href="#">{t}</a>
            </React.Fragment>
          ))}
        </nav>
        <p className="mt-[43px] text-[12px] leading-[18px]">
          © State of Queensland 2025 <span className="text-[#8b8d9b]">v. 6.11.16350</span>
        </p>
      </div>
    </section>
  </footer>
);

export default function App() {
  return (
    <div className="h-[1705px] w-[1280px] overflow-hidden bg-white [font-family:'Open_Sans','Noto_Sans',sans-serif]">
      <Header />
      <Main />
      <Footer />
    </div>
  );
}
